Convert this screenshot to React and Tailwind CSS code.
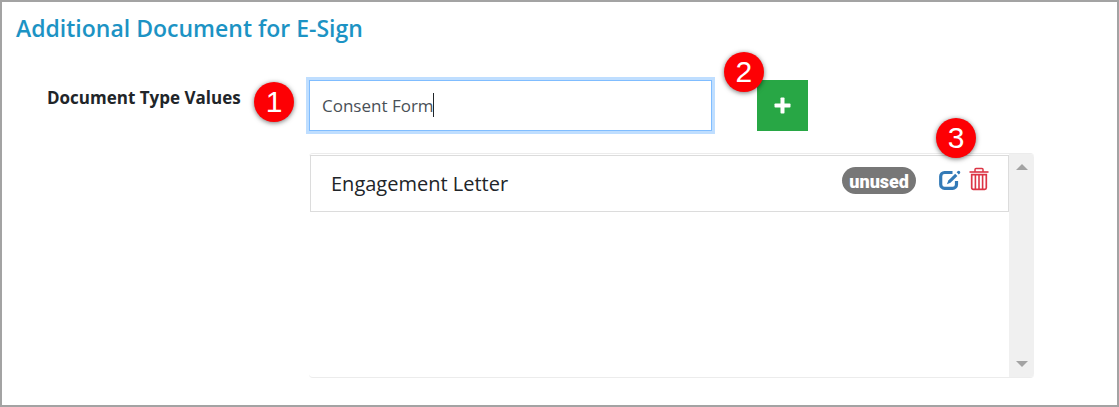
import React, { useState } from 'react';

const StepBadge = ({ number, className }) => (
  <span
    className={`absolute z-10 flex h-10 w-10 items-center justify-center rounded-full bg-[#fd0004] font-['Liberation_Sans',sans-serif] text-[30px] leading-none text-white shadow-[0_1px_5px_rgba(0,0,0,0.55)] ${className}`}
  >
    {number}
  </span>
);

const PlusIcon = () => (
  <svg className="h-[17px] w-[17px]" viewBox="0 0 17 17" fill="currentColor" aria-hidden="true">
    <rect x="6.5" y="0.5" width="4" height="16" rx="0.8" />
    <rect x="0.5" y="6.5" width="16" height="4" rx="0.8" />
  </svg>
);

const EditIcon = () => (
  <svg className="h-6 w-6" viewBox="0 0 24 24" fill="none" aria-hidden="true">
    <path
      d="M14.5 5.5H6.5A3.8 3.8 0 0 0 2.7 9.3v8.2a3.8 3.8 0 0 0 3.8 3.8h8.2a3.8 3.8 0 0 0 3.8-3.8V14"
      stroke="currentColor"
      strokeWidth="3.2"
    />
    <path d="M17.2 6.7l2.2 2.2-6.9 6.8-3.6 1.5 1.4-3.7z" fill="currentColor" />
    <path d="M18.6 5.3l1-1a1.55 1.55 0 0 1 2.2 2.2l-1 1z" fill="currentColor" />
  </svg>
);

const TrashIcon = () => (
  <svg className="h-6 w-5" viewBox="0 0 20 24" fill="none" stroke="currentColor" aria-hidden="true">
    <path d="M0.5 5h19" strokeWidth="1.6" />
    <path d="M6 5V2.4a1 1 0 0 1 1-1h6a1 1 0 0 1 1 1V5" strokeWidth="1.5" />
    <path d="M2.7 7.6h14.6v13.2a1.6 1.6 0 0 1-1.6 1.6H4.3a1.6 1.6 0 0 1-1.6-1.6z" strokeWidth="1.7" />
    <path d="M6.4 8v14M10 8v14M13.6 8v14" strokeWidth="1.6" />
  </svg>
);

const ScrollArrow = ({ label, points }) => (
  <button type="button" aria-label={label} className="flex h-[26px] w-full items-center justify-center text-[#a3a3a3]">
    <svg className="h-[6px] w-3" viewBox="0 0 12 6" fill="currentColor" aria-hidden="true">
      <polygon points={points} />
    </svg>
  </button>
);

const App = () => {
  const [value, setValue] = useState('Consent Form');
  const [documents, setDocuments] = useState(['Engagement Letter']);

  const addDocument = () => {
    if (!value.trim()) return;
    setDocuments([...documents, value.trim()]);
    setValue('');
  };

  return (
    <main className="min-h-screen border-2 border-[#a3a3a3] bg-white px-[14px] pt-2 pb-[27px] font-['Open_Sans','Noto_Sans',sans-serif] text-[#212529]">
      <h1 className="text-[23px] leading-9 font-semibold text-[#1c93c4]">Additional Document for E-Sign</h1>

      <div className="mt-[34px] flex pr-[69px] pl-[31px]">
        <div className="relative w-[262px] shrink-0">
          <label htmlFor="document-type" className="block pt-1 text-[17px] leading-7 font-bold">
            Document Type Values
          </label>
          <StepBadge number="1" className="top-[2px] right-[15px]" />
        </div>

        <div className="min-w-0 flex-1">
          <div className="flex gap-[45px]">
            <div className="relative w-5/9">
              <input
                id="document-type"
                type="text"
                value={value}
                onChange={(e) => setValue(e.target.value)}
                className="h-[51px] w-full border border-[#80bdff] bg-white px-3 text-[17px] text-[#495057] ring-3 ring-[#bfdeff] outline-none"
              />
              <span className="absolute top-[13px] left-[124px] h-6 w-px bg-[#212529]" />
            </div>
            <div className="relative">
              <button
                type="button"
                aria-label="Add document type"
                onClick={addDocument}
                className="flex h-[51px] w-[51px] items-center justify-center bg-[#28a745] text-white"
              >
                <PlusIcon />
              </button>
              <StepBadge number="2" className="-top-7 -left-[33px]" />
            </div>
          </div>

          <div className="mt-[22px] flex h-[225px] rounded-sm border-y border-[#ececec]">
            <ul className="min-w-0 flex-1 pt-px pl-px">
              {documents.map((name) => (
                <li key={name} className="flex h-[57px] items-start border border-[#dcdcdc] pr-[19px] pl-5">
                  <span className="flex-1 pt-[14px] text-[20px] leading-7">{name}</span>
                  <span className="mt-[11px] flex h-[27px] items-center rounded-full bg-[#777777] px-[7px] pt-px font-['Roboto',sans-serif] text-[18px] font-black text-white">
                    unused
                  </span>
                  <div className="relative mt-[11px] ml-[22px] flex gap-[7px]">
                    <button type="button" aria-label="Edit" className="text-[#337ab7]">
                      <EditIcon />
                    </button>
                    <button type="button" aria-label="Delete" className="text-[#dc3545]">
                      <TrashIcon />
                    </button>
                    <StepBadge number="3" className="-top-[49px] -left-[2px]" />
                  </div>
                </li>
              ))}
            </ul>
            <div className="flex w-[25px] flex-col justify-between rounded-r-sm bg-[#f0f0f0]">
              <ScrollArrow label="Scroll up" points="6,0 12,6 0,6" />
              <ScrollArrow label="Scroll down" points="0,0 12,0 6,6" />
            </div>
          </div>
        </div>
      </div>
    </main>
  );
};

export default App;
